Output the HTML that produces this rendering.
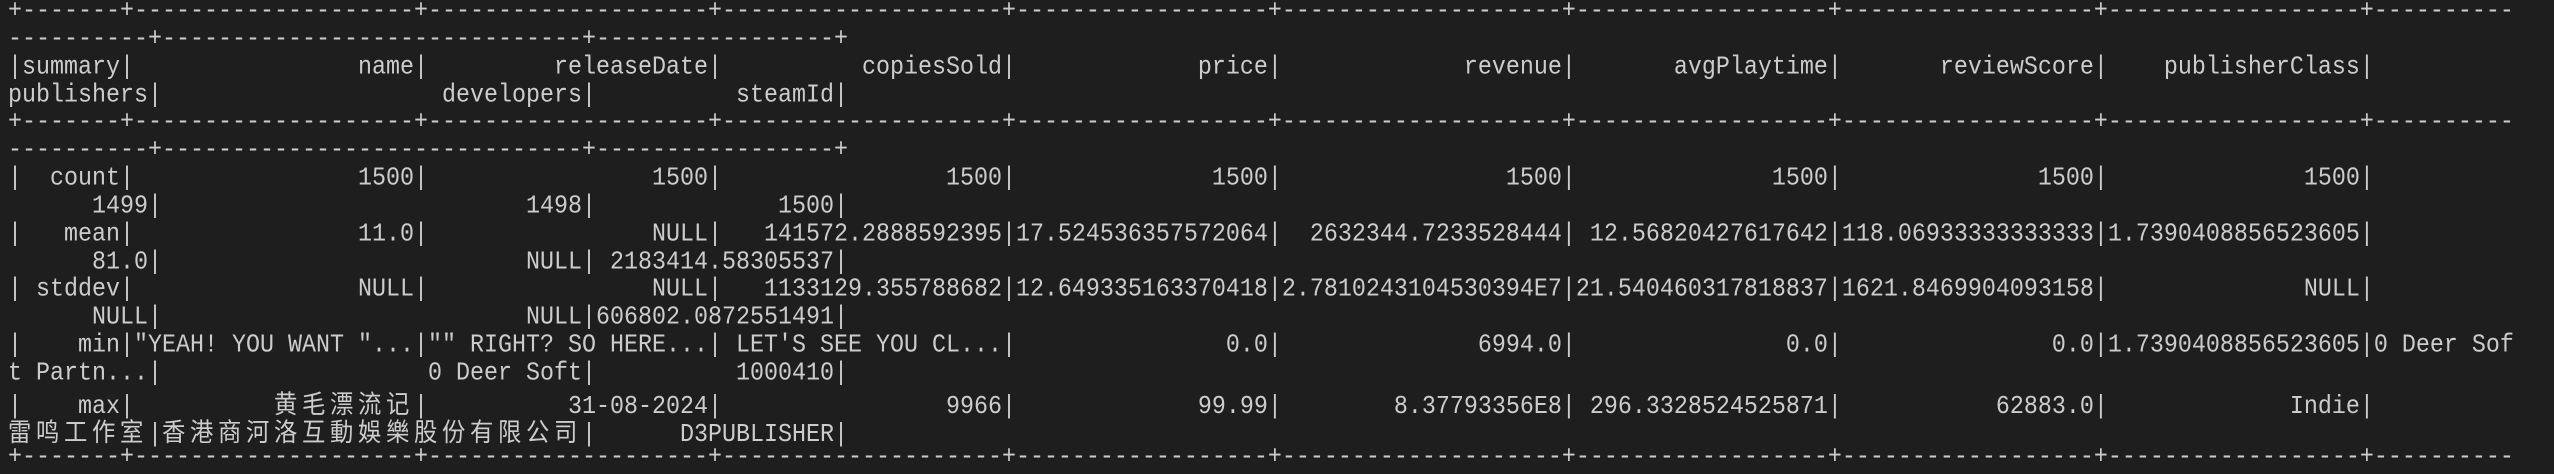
<!DOCTYPE html>
<html><head><meta charset="utf-8">
<style>
html,body{margin:0;padding:0;background:#1e1e1e;width:2554px;height:474px;overflow:hidden;}
#t{position:absolute;left:8px;top:-1px;font-family:"Liberation Mono","Noto Sans CJK SC",monospace;font-size:23.33px;color:#cccccc;}
.l{height:27.85px;line-height:27.85px;white-space:pre;transform:scaleY(1.1);transform-origin:50% 55%;}
.c{font-family:"Noto Sans CJK SC","Liberation Mono",sans-serif;letter-spacing:4.67px;font-size:23.33px;}
</style></head><body>
<div id="t"></div>
<script>
const isC=ch=>ch.charCodeAt(0)>0x2e80;
const dw=s=>[...s].reduce((a,ch)=>a+(isC(ch)?2:1),0);
const p=(s,w)=>' '.repeat(Math.max(0,w-dw(s)))+s;
const W=[7,20,20,20,18,20,18,18,18,20,30,17];
const rows=[
["summary","name","releaseDate","copiesSold","price","revenue","avgPlaytime","reviewScore","publisherClass","publishers","developers","steamId"],
null,
["count","1500","1500","1500","1500","1500","1500","1500","1500","1499","1498","1500"],
["mean","11.0","NULL","141572.2888592395","17.524536357572064","2632344.7233528444","12.56820427617642","118.06933333333333","1.7390408856523605","81.0","NULL","2183414.58305537"],
["stddev","NULL","NULL","1133129.355788682","12.649335163370418","2.7810243104530394E7","21.540460317818837","1621.8469904093158","NULL","NULL","NULL","606802.0872551491"],
["min","\"YEAH! YOU WANT \"...","\"\" RIGHT? SO HERE..."," LET'S SEE YOU CL...","0.0","6994.0","0.0","0.0","1.7390408856523605","0 Deer Soft Partn...","0 Deer Soft","1000410"],
["max","黄毛漂流记","31-08-2024","9966","99.99","8.37793356E8","296.3328524525871","62883.0","Indie","雷鸣工作室","香港商河洛互動娛樂股份有限公司","D3PUBLISHER"]
];
const border='+'+W.map(w=>'-'.repeat(w)).join('+')+'+';
let full=[border];
full.push('|'+rows[0].map((c,i)=>p(c,W[i])).join('|')+'|');
full.push(border);
for(let r=2;r<rows.length;r++) full.push('|'+rows[r].map((c,i)=>p(c,W[i])).join('|')+'|');
full.push(border);
const lines=[];
for(const s of full){
  let a='',b='',w=0,first=true;
  for(const ch of s){
    const d=isC(ch)?2:1;
    if(first && w+d>179) first=false;
    if(first){a+=ch;w+=d;} else b+=ch;
  }
  lines.push(a); if(b) lines.push(b);
}
lines.pop();
const esc=s=>s.replace(/&/g,'&amp;').replace(/</g,'&lt;').replace(/>/g,'&gt;');
const fmt=s=>{let o='',run='';for(const ch of s){if(isC(ch)){run+=ch;}else{if(run){o+='<span class="c">'+run+'</span>';run='';}o+=esc(ch);}}if(run)o+='<span class="c">'+run+'</span>';return o;};
document.getElementById('t').innerHTML=lines.map(l=>'<div class="l">'+fmt(l)+'</div>').join('');
</script>
</body></html>
